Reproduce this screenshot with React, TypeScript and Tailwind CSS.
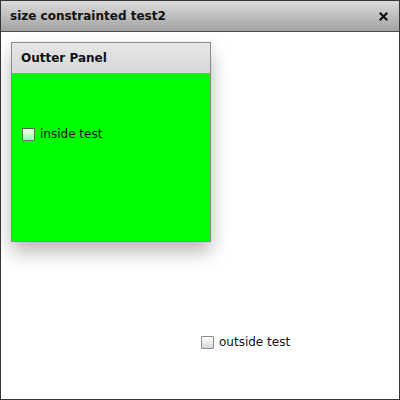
export default function App() {
  return (
    <div
      className="w-[400px] h-[400px] border border-[#353535] bg-white flex flex-col overflow-hidden"
      style={{ fontFamily: '"DejaVu Sans", sans-serif' }}
    >
      <div className="h-[31px] shrink-0 flex items-center justify-between pl-[9px] pr-[11px] border-b border-[#4a4a4a] bg-gradient-to-b from-[#dcdcdc] to-[#a2a2a2]">
        <span className="text-[12px] font-bold text-[#111] leading-none">size constrainted test2</span>
        <svg width="9" height="9" viewBox="0 0 9 9">
          <path d="M1.5 1.5 L7.5 7.5 M7.5 1.5 L1.5 7.5" stroke="#111" strokeWidth="2.2" strokeLinecap="square" />
        </svg>
      </div>

      <div className="flex-1 flex flex-col">
        <div className="ml-[10px] mt-[10px] w-[200px] h-[200px] border border-[#8a8a8a] flex flex-col shadow-[0_10px_18px_rgba(0,0,0,0.28)]">
          <div className="h-[31px] shrink-0 flex items-center pl-[9px] border-b border-[#9a9a9a] bg-gradient-to-b from-[#e6e6e6] to-[#d8d8d8]">
            <span className="text-[12px] font-bold text-[#111]">Outter Panel</span>
          </div>
          <div className="flex-1 bg-[#00ff00] pt-[51px] pl-[10px]">
            <label className="flex items-center gap-[5px] text-[12px] text-[#111]">
              <span className="w-[13px] h-[13px] border border-[rgba(0,0,0,0.55)] bg-gradient-to-b from-[rgba(255,255,255,0.95)] to-[rgba(255,255,255,0.6)] rounded-[1px]" />
              inside test
            </label>
          </div>
        </div>

        <label className="ml-[200px] mt-[91px] flex items-center gap-[5px] text-[12px] text-[#111]">
          <span className="w-[13px] h-[13px] border border-[#8c8c8c] bg-gradient-to-b from-white to-[#d6d6d6] rounded-[1px]" />
          outside test
        </label>
      </div>
    </div>
  )
}
